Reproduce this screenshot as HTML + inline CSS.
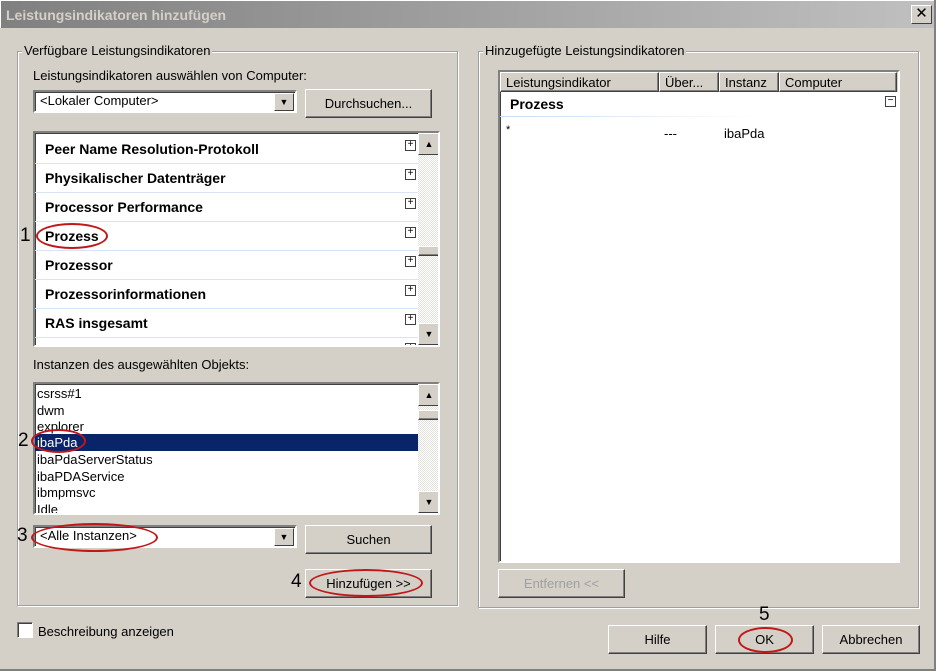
<!DOCTYPE html>
<html><head><meta charset="utf-8"><style>
*{box-sizing:border-box}
body{margin:0;width:936px;height:671px;background:#d4d0c8;font-family:"Liberation Sans",sans-serif;font-size:13px;color:#000;position:relative;overflow:hidden}
.a{position:absolute}
.title{left:0;top:0;width:936px;height:28px;background:linear-gradient(90deg,#808080,#c0c0c0);color:#d4d0c8;font-weight:bold;font-size:14px;padding:6px 0 0 5px;border:1px solid #fff;border-bottom:none}
.close{left:911px;top:5px;width:21px;height:19px;background:#d4d0c8;border:1px solid;border-color:#fff #404040 #404040 #fff;text-align:center;font-size:15px;line-height:16px}
.grp{border:1px solid #a0a0a0;box-shadow:1px 1px 0 #fff inset,1px 1px 0 #fff}
.gl{background:#d4d0c8;padding:0 2px}
.sunk{background:#fff;border:2px solid;border-color:#808080 #fff #fff #808080;box-shadow:inset 1px 1px 0 #404040}
.btn{background:#d4d0c8;border:1px solid;border-color:#fff #404040 #404040 #fff;box-shadow:inset -1px -1px 0 #808080;text-align:center}
.dd{width:20px;height:18px;top:1px;right:1px;background:#d4d0c8;border:1px solid;border-color:#fff #404040 #404040 #fff;font-size:9px;text-align:center;line-height:16px}
.row{left:0;width:383px;height:29px;font-weight:bold;font-size:14px;padding:6px 0 0 10px;border-bottom:1px solid #d8e6f4}
.plus{left:370px;width:11px;height:11px;border:1px solid #404040;font-size:10px;line-height:8px;text-align:center;font-weight:normal}
.sb{background:repeating-conic-gradient(#fff 0 25%,#e4e2dc 0 50%) 0 0/2px 2px}
.ar{width:22px;height:22px;background:#d4d0c8;border:1px solid;border-color:#fff #404040 #404040 #fff;font-size:9px;text-align:center;line-height:20px}
.ell{border:2px solid #c01818;border-radius:50%}
.num{font-size:19px}
.it{left:2px;font-size:13px;height:17px;line-height:17px}
</style></head><body>
<div class="a title">Leistungsindikatoren hinzufügen</div>
<div class="a close">✕</div>

<div class="a grp" style="left:17px;top:51px;width:441px;height:555px"></div>
<div class="a gl" style="left:22px;top:43px">Verfügbare Leistungsindikatoren</div>
<div class="a" style="left:33px;top:68px">Leistungsindikatoren auswählen von Computer:</div>
<div class="a sunk" style="left:33px;top:90px;width:264px;height:23px;padding:1px 5px">&lt;Lokaler Computer&gt;<div class="a dd">▼</div></div>
<div class="a btn" style="left:305px;top:89px;width:127px;height:29px;line-height:27px">Durchsuchen...</div>

<div class="a sunk" style="left:33px;top:131px;width:407px;height:216px;overflow:hidden">
 <div class="a row" style="top:2px">Peer Name Resolution-Protokoll</div>
 <div class="a row" style="top:31px">Physikalischer Datenträger</div>
 <div class="a row" style="top:60px">Processor Performance</div>
 <div class="a row" style="top:89px">Prozess</div>
 <div class="a row" style="top:118px">Prozessor</div>
 <div class="a row" style="top:147px">Prozessorinformationen</div>
 <div class="a row" style="top:176px">RAS insgesamt</div>
 <div class="a plus" style="top:7px">+</div><div class="a plus" style="top:36px">+</div><div class="a plus" style="top:65px">+</div><div class="a plus" style="top:94px">+</div><div class="a plus" style="top:123px">+</div><div class="a plus" style="top:152px">+</div><div class="a plus" style="top:181px">+</div><div class="a plus" style="top:210px">+</div>
 <div class="a sb" style="left:383px;top:0;width:22px;height:212px"></div>
 <div class="a ar" style="left:383px;top:0">▲</div>
 <div class="a btn" style="left:383px;top:113px;width:22px;height:10px"></div>
 <div class="a ar" style="left:383px;top:190px">▼</div>
</div>
<div class="a num" style="left:20px;top:225px">1</div>
<div class="a ell" style="left:36px;top:223px;width:72px;height:26px"></div>

<div class="a" style="left:33px;top:357px">Instanzen des ausgewählten Objekts:</div>
<div class="a sunk" style="left:33px;top:382px;width:407px;height:133px;overflow:hidden">
 <div class="a it" style="top:1px">csrss#1</div>
 <div class="a it" style="top:18px">dwm</div>
 <div class="a it" style="top:34px">explorer</div>
 <div class="a" style="left:0;top:50px;width:383px;height:17px;background:#0a246a"></div>
 <div class="a it" style="top:50px;color:#fff">ibaPda</div>
 <div class="a it" style="top:67px">ibaPdaServerStatus</div>
 <div class="a it" style="top:84px">ibaPDAService</div>
 <div class="a it" style="top:100px">ibmpmsvc</div>
 <div class="a it" style="top:117px">Idle</div>
 <div class="a sb" style="left:383px;top:0;width:22px;height:129px"></div>
 <div class="a ar" style="left:383px;top:0">▲</div>
 <div class="a btn" style="left:383px;top:26px;width:22px;height:10px"></div>
 <div class="a ar" style="left:383px;top:107px">▼</div>
</div>
<div class="a num" style="left:18px;top:430px">2</div>
<div class="a ell" style="left:31px;top:429px;width:55px;height:24px"></div>

<div class="a sunk" style="left:33px;top:525px;width:264px;height:23px;padding:1px 5px">&lt;Alle Instanzen&gt;<div class="a dd">▼</div></div>
<div class="a btn" style="left:305px;top:525px;width:127px;height:29px;line-height:27px">Suchen</div>
<div class="a num" style="left:17px;top:525px">3</div>
<div class="a ell" style="left:31px;top:523px;width:127px;height:29px"></div>

<div class="a btn" style="left:305px;top:569px;width:127px;height:29px;line-height:27px">Hinzufügen &gt;&gt;</div>
<div class="a num" style="left:291px;top:571px">4</div>
<div class="a ell" style="left:309px;top:569px;width:114px;height:28px"></div>

<div class="a sunk" style="left:17px;top:622px;width:16px;height:16px;border-width:1px"></div>
<div class="a" style="left:38px;top:624px">Beschreibung anzeigen</div>

<div class="a grp" style="left:478px;top:51px;width:441px;height:557px"></div>
<div class="a gl" style="left:483px;top:43px">Hinzugefügte Leistungsindikatoren</div>
<div class="a sunk" style="left:498px;top:70px;width:402px;height:493px;overflow:hidden">
 <div class="a" style="left:0;top:0;width:400px;height:20px;background:#d4d0c8"></div>
 <div class="a btn" style="left:0;top:0;width:159px;height:20px;text-align:left;padding:2px 5px">Leistungsindikator</div>
 <div class="a btn" style="left:159px;top:0;width:60px;height:20px;text-align:left;padding:2px 5px">Über...</div>
 <div class="a btn" style="left:219px;top:0;width:60px;height:20px;text-align:left;padding:2px 5px">Instanz</div>
 <div class="a btn" style="left:279px;top:0;width:118px;height:20px;text-align:left;padding:2px 5px">Computer</div>
 <div class="a" style="left:10px;top:24px;font-weight:bold;font-size:14px">Prozess</div>
 <div class="a" style="left:0;top:44px;width:260px;height:1px;background:linear-gradient(90deg,#c8dcf0,#fff)"></div>
 <div class="a plus" style="left:385px;top:24px">−</div>
 <div class="a" style="left:6px;top:52px;font-size:11px">*</div>
 <div class="a" style="left:164px;top:54px">---</div>
 <div class="a" style="left:224px;top:54px">ibaPda</div>
</div>
<div class="a btn" style="left:498px;top:569px;width:127px;height:29px;line-height:27px;color:#a0a0a0">Entfernen &lt;&lt;</div>

<div class="a btn" style="left:608px;top:625px;width:99px;height:29px;line-height:27px">Hilfe</div>
<div class="a btn" style="left:715px;top:625px;width:99px;height:29px;line-height:27px">OK</div>
<div class="a btn" style="left:822px;top:625px;width:98px;height:29px;line-height:27px">Abbrechen</div>
<div class="a num" style="left:759px;top:604px">5</div>
<div class="a ell" style="left:738px;top:627px;width:55px;height:26px"></div>
<div class="a" style="left:934px;top:0;width:2px;height:671px;background:#808080"></div>
<div class="a" style="left:0;top:669px;width:936px;height:2px;background:#808080"></div>
</body></html>
